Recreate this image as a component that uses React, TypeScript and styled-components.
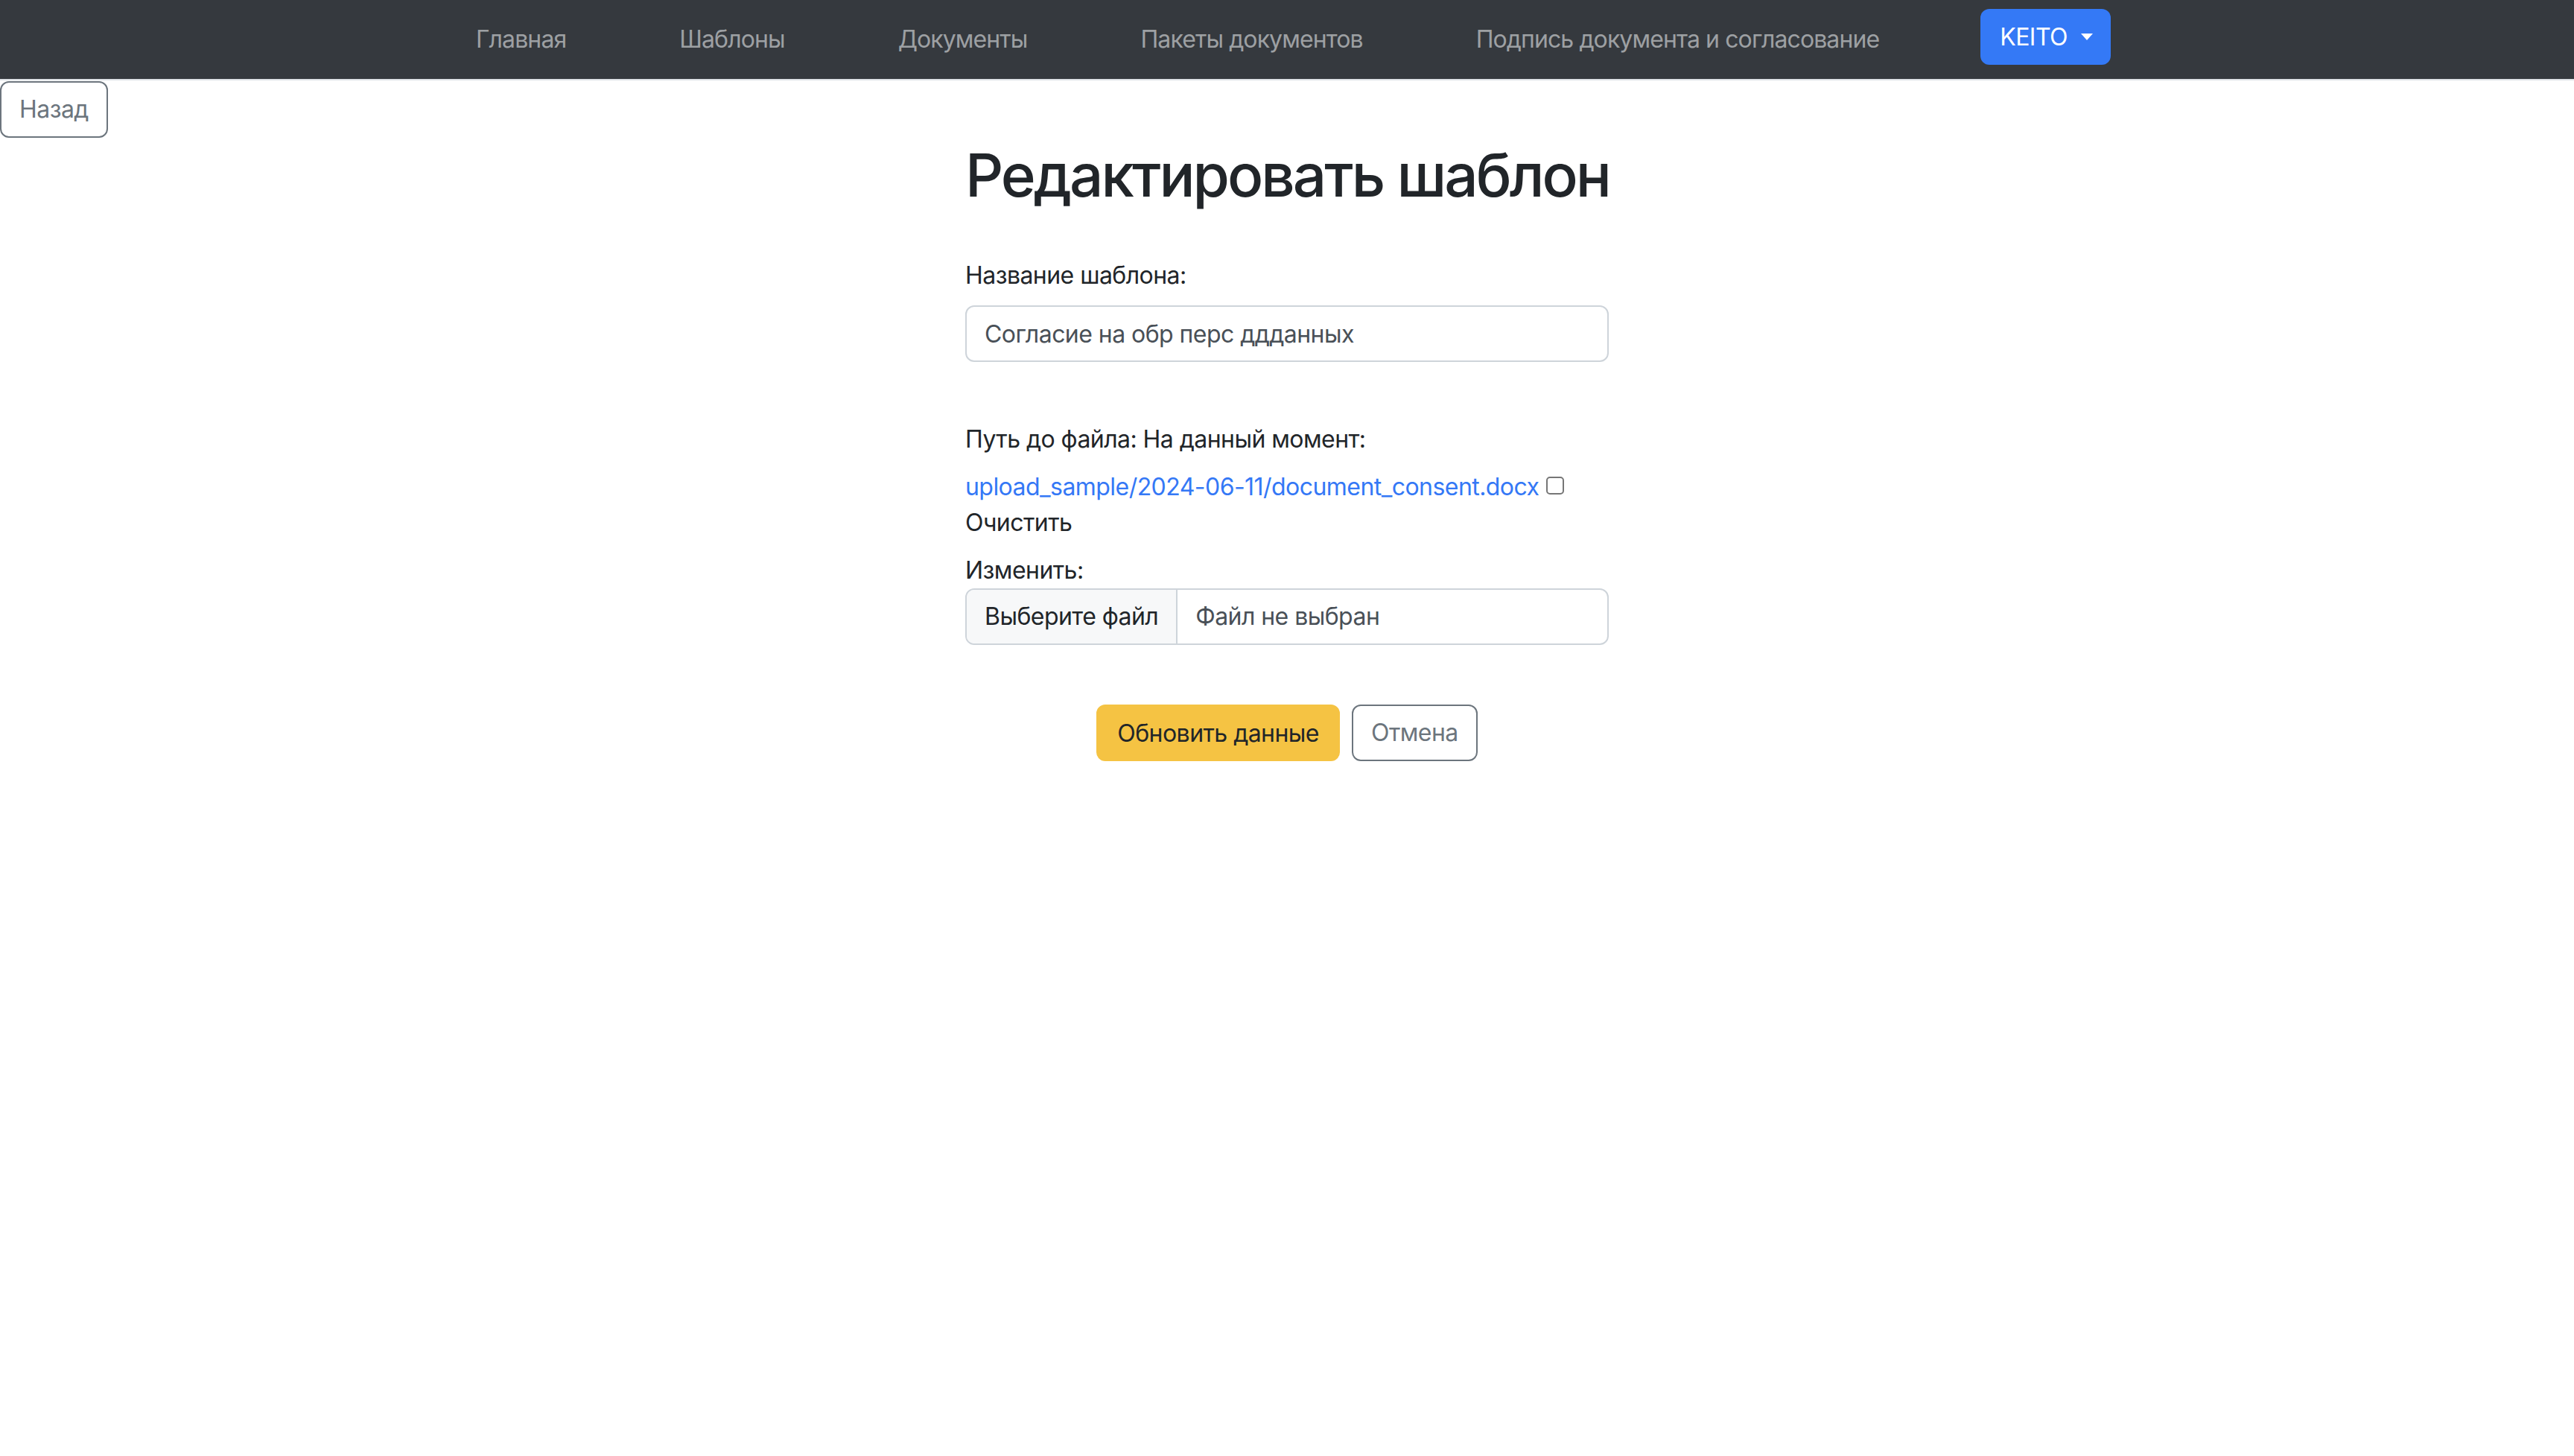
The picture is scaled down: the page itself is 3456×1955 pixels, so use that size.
import React from "react";
import styled, { createGlobalStyle } from "styled-components";

const GlobalStyle = createGlobalStyle`
  html, body {
    margin: 0;
    padding: 0;
    background: #ffffff;
  }
  body {
    font-family: Inter, "Noto Sans", "Liberation Sans", sans-serif;
    font-size: 32px;
    line-height: 48px;
    letter-spacing: -0.55px;
    color: #212529;
  }
  * { box-sizing: border-box; }
  button, input { letter-spacing: inherit; }
`;

const Navbar = styled.nav`
  height: 108px;
  background: #35393e;
  border-bottom: 2px solid #dee2e6;
  display: flex;
  align-items: center;
  justify-content: center;
  padding-left: 17px;
`;

const NavList = styled.ul`
  list-style: none;
  margin: 0;
  padding: 0;
  display: flex;
  align-items: center;
  gap: 152px;
`;

const NavLink = styled.a`
  color: #9da0a3;
  text-decoration: none;
  font-size: 32px;
  line-height: 48px;
  white-space: nowrap;
  letter-spacing: -0.9px;
`;

const UserButton = styled.button`
  margin-left: -16px;
  margin-bottom: 8px;
  height: 75px;
  padding: 0 24px 0 26px;
  background: #3479f6;
  border: none;
  border-radius: 12px;
  color: #ffffff;
  font-family: inherit;
  font-size: 32px;
  display: flex;
  align-items: center;
  &::after {
    content: "";
    margin-left: 18px;
    border-top: 9px solid #ffffff;
    border-left: 8px solid transparent;
    border-right: 8px solid transparent;
  }
`;

const OutlineButton = styled.button<{ $block?: boolean }>`
  height: 76px;
  padding: 0 24px;
  background: #ffffff;
  border: 2px solid #6c757d;
  border-radius: 12px;
  color: #6c757d;
  font-family: inherit;
  font-size: 32px;
  line-height: 48px;
  display: ${(p) => (p.$block ? "block" : "inline-block")};
`;

const BackRow = styled.div`
  padding-top: 1px;
`;

const Main = styled.main`
  width: 864px;
  margin: 0 auto;
`;

const Title = styled.h1`
  margin: 2px 0 0;
  font-size: 80px;
  line-height: 96px;
  font-weight: 500;
  text-align: center;
  white-space: nowrap;
  letter-spacing: -3px;
`;

const Form = styled.form`
  margin-top: 63px;
`;

const Field = styled.div<{ $gap?: number }>`
  margin-bottom: ${(p) => p.$gap ?? 80}px;
`;

const Label = styled.label<{ $gap?: number }>`
  display: block;
  margin-bottom: ${(p) => p.$gap ?? 16}px;
`;

const TextInput = styled.input`
  display: block;
  width: 100%;
  height: 76px;
  padding: 0 24px;
  border: 2px solid #ced4da;
  border-radius: 12px;
  font-family: inherit;
  font-size: 32px;
  color: #495057;
  outline: none;
`;

const FileLine = styled.div`
  display: flex;
  align-items: center;
`;

const FileLink = styled.a`
  color: #3478f6;
  text-decoration: none;
`;

const Checkbox = styled.input`
  appearance: none;
  width: 24px;
  height: 24px;
  margin: 0 0 0 10px;
  border: 2px solid #767676;
  border-radius: 5px;
  background: #fff;
  position: relative;
  top: -2px;
`;

const FileGroup = styled.div`
  display: flex;
  height: 76px;
  border: 2px solid #ced4da;
  border-radius: 12px;
  overflow: hidden;
`;

const FileButton = styled.span`
  display: flex;
  align-items: center;
  padding: 0 24px;
  background: #f7f8f9;
  border-right: 2px solid #ced4da;
  color: #212529;
  white-space: nowrap;
`;

const FileName = styled.span`
  display: flex;
  align-items: center;
  padding: 0 24px;
  color: #495057;
`;

const Actions = styled.div`
  display: flex;
  justify-content: center;
  gap: 16px;
`;

const WarningButton = styled.button`
  height: 76px;
  padding: 0 26px;
  background: #f5c343;
  border: 2px solid #f5c343;
  border-radius: 12px;
  color: #212529;
  font-family: inherit;
  font-size: 32px;
`;

const navItems = [
  "Главная",
  "Шаблоны",
  "Документы",
  "Пакеты документов",
  "Подпись документа и согласование",
];

export default function App() {
  return (
    <>
      <GlobalStyle />
      <Navbar>
        <NavList>
          {navItems.map((t) => (
            <li key={t}>
              <NavLink href="#">{t}</NavLink>
            </li>
          ))}
          <li>
            <UserButton type="button">KEITO</UserButton>
          </li>
        </NavList>
      </Navbar>
      <BackRow>
        <OutlineButton $block type="button">Назад</OutlineButton>
      </BackRow>
      <Main>
        <Title>Редактировать шаблон</Title>
        <Form onSubmit={(e) => e.preventDefault()}>
          <Field>
            <Label>Название шаблона:</Label>
            <TextInput defaultValue="Согласие на обр перс ддданных" />
          </Field>
          <Field>
            <Label>Путь до файла: На данный момент:</Label>
            <FileLine>
              <FileLink href="#">upload_sample/2024-06-11/document_consent.docx</FileLink>
              <Checkbox type="checkbox" />
            </FileLine>
            <Label $gap={16}>Очистить</Label>
            <Label $gap={0}>Изменить:</Label>
            <FileGroup>
              <FileButton>Выберите файл</FileButton>
              <FileName>Файл не выбран</FileName>
            </FileGroup>
          </Field>
          <Actions>
            <WarningButton type="submit">Обновить данные</WarningButton>
            <OutlineButton type="button">Отмена</OutlineButton>
          </Actions>
        </Form>
      </Main>
    </>
  );
}
